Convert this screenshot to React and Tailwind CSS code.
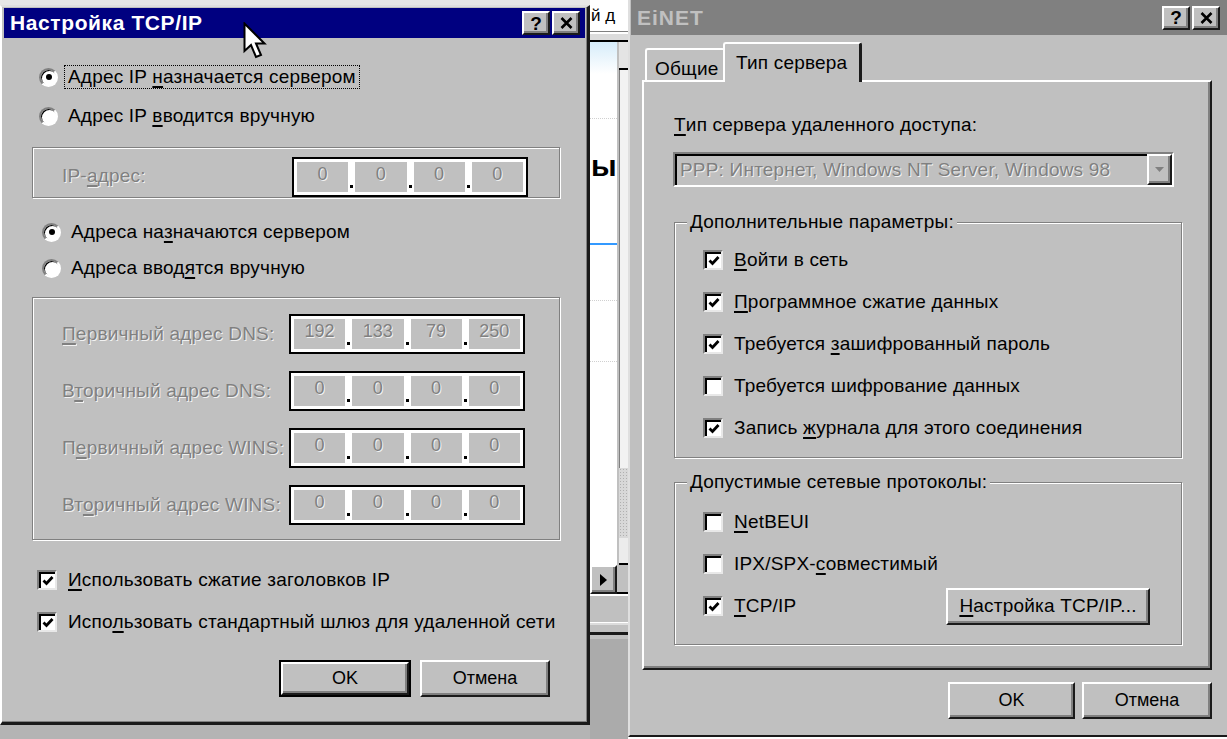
import React from 'react'

const font = "font-['Liberation_Sans',Arial,sans-serif]"
const txt = 'text-[19px] tracking-[0.2px]'
const dim = 'text-[#808080] [text-shadow:1px_1px_0_rgba(255,255,255,0.8)]'
const raised =
  'border-2 border-t-white border-l-white border-r-[#1a1a1a] border-b-[#1a1a1a] shadow-[inset_-2px_-2px_0_#808080] bg-[#c0c0c0]'
const etched = 'border border-[#808080] shadow-[inset_1px_1px_0_#fff,1px_1px_0_#fff]'

function Mn({ t, u }) {
  if (u == null) return <>{t}</>
  return (
    <>
      {t.slice(0, u)}
      <span className="underline decoration-2 underline-offset-[3px]">{t[u]}</span>
      {t.slice(u + 1)}
    </>
  )
}

function Radio({ on }) {
  return (
    <div className="flex h-[19px] w-[19px] shrink-0 items-center justify-center rounded-full border-2 border-t-[#808080] border-l-[#808080] border-r-white border-b-white bg-white shadow-[inset_1px_1px_0_#000]">
      {on && <div className="h-[6px] w-[6px] rounded-full bg-black" />}
    </div>
  )
}

function Check({ on }) {
  return (
    <div className="flex h-[20px] w-[20px] shrink-0 items-center justify-center border-2 border-t-[#808080] border-l-[#808080] border-r-[#e8e8e8] border-b-[#e8e8e8] bg-white shadow-[inset_2px_2px_0_#000]">
      {on && (
        <svg width="14" height="14" viewBox="0 0 14 14" className="ml-[2px] mt-[2px]">
          <path d="M2.5 6.5 L5.5 9.5 L11.5 3" stroke="#000" strokeWidth="2.8" fill="none" />
        </svg>
      )}
    </div>
  )
}

function TitleButtons() {
  return (
    <div className="flex gap-[2px]">
      <div className={`flex h-[24px] w-[28px] items-center justify-center ${raised} text-[19px] font-bold leading-none`}>?</div>
      <div className={`flex h-[24px] w-[28px] items-center justify-center ${raised}`}>
        <svg width="13" height="12" viewBox="0 0 13 12">
          <path d="M1.5 1 L11.5 11 M11.5 1 L1.5 11" stroke="#000" strokeWidth="2.6" />
        </svg>
      </div>
    </div>
  )
}

function IpField({ values }) {
  return (
    <div className="flex h-[40px] w-[236px] shrink-0 border-2 border-black bg-white p-[3px]">
      {values.map((v, i) => (
        <React.Fragment key={i}>
          {i > 0 && (
            <div className="flex w-[7px] flex-col items-center justify-end pb-[4px]">
              <div className="h-[3px] w-[3px] bg-black" />
            </div>
          )}
          <div className={`flex flex-1 justify-center bg-[#c0c0c0] text-[18px] leading-[24px] ${dim}`}>{v}</div>
        </React.Fragment>
      ))}
    </div>
  )
}

function Btn({ children, w, def }) {
  const inner = (
    <div className={`flex h-full w-full items-center justify-center ${raised} text-[18px]`}>{children}</div>
  )
  if (def) return <div className={`h-[37px] ${w} border-2 border-black`}>{inner}</div>
  return <div className={`h-[37px] ${w}`}>{inner}</div>
}

function CheckRow({ on, t, u, h = 'h-[42px]' }) {
  return (
    <div className={`flex ${h} items-center gap-[11px]`}>
      <Check on={on} />
      <span className={txt}>
        <Mn t={t} u={u} />
      </span>
    </div>
  )
}

function DnsRow({ t, u, values }) {
  return (
    <div className="flex h-[40px] items-center justify-between">
      <span className={`${txt} ${dim}`}>
        <Mn t={t} u={u} />
      </span>
      <IpField values={values} />
    </div>
  )
}

function TcpDialog() {
  return (
    <div className="flex h-[720px] flex-col border-t-2 border-l-2 border-t-[#dfdfdf] border-l-white border-r-[3px] border-b-[3px] border-r-[#1a1a1a] border-b-[#1a1a1a] bg-[#c0c0c0] px-[2px] pt-[1px] shadow-[inset_-1px_-1px_0_#808080]">
      <div className="flex h-[30px] items-center justify-between bg-[#000080] pl-[6px] pr-[5px]">
        <span className="text-[21px] font-bold tracking-[0.6px] text-white">Настройка TCP/IP</span>
        <TitleButtons />
      </div>

      <div className="mt-[21px] flex h-[36px] items-center pl-[35px]">
        <Radio on />
        <span className={`ml-[6px] border border-dotted border-black px-[3px] leading-[22px] ${txt}`}>
          <Mn t="Адрес IP назначается сервером" u={9} />
        </span>
      </div>
      <div className="mt-[3px] flex h-[36px] items-center pl-[35px]">
        <Radio />
        <span className={`ml-[10px] ${txt}`}>
          <Mn t="Адрес IP вводится вручную" u={9} />
        </span>
      </div>

      <div className={`ml-[28px] mt-[13px] flex h-[51px] w-[528px] items-center justify-between pl-[29px] pr-[31px] pt-[8px] ${etched}`}>
        <span className={`${txt} ${dim}`}>
          <Mn t="IP-адрес:" u={3} />
        </span>
        <IpField values={['0', '0', '0', '0']} />
      </div>

      <div className="mt-[16px] flex h-[36px] items-center pl-[38px]">
        <Radio on />
        <span className={`ml-[10px] ${txt}`}>
          <Mn t="Адреса назначаются сервером" u={9} />
        </span>
      </div>
      <div className="flex h-[36px] items-center pl-[38px]">
        <Radio />
        <span className={`ml-[10px] ${txt}`}>
          <Mn t="Адреса вводятся вручную" u={11} />
        </span>
      </div>

      <div className={`ml-[28px] mt-[11px] flex h-[243px] w-[528px] flex-col gap-[17px] pl-[29px] pr-[34px] pt-[16px] ${etched}`}>
        <DnsRow t="Первичный адрес DNS:" u={0} values={['192', '133', '79', '250']} />
        <DnsRow t="Вторичный адрес DNS:" u={1} values={['0', '0', '0', '0']} />
        <DnsRow t="Первичный адрес WINS:" u={1} values={['0', '0', '0', '0']} />
        <DnsRow t="Вторичный адрес WINS:" u={2} values={['0', '0', '0', '0']} />
      </div>

      <div className="ml-[33px] mt-[22px]">
        <CheckRow on t="Использовать сжатие заголовков IP" u={0} h="h-[36px]" />
      </div>
      <div className="ml-[33px] mt-[6px]">
        <CheckRow on t="Использовать стандартный шлюз для удаленной сети" u={4} h="h-[36px]" />
      </div>

      <div className="mt-[20px] flex justify-end gap-[9px] pr-[35px]">
        <Btn w="w-[132px]" def>OK</Btn>
        <Btn w="w-[130px]">Отмена</Btn>
      </div>
    </div>
  )
}

function BackStrip() {
  return (
    <div className="flex w-[38px] shrink-0 flex-col bg-[#c0c0c0]">
      <div className="h-[31px] overflow-hidden whitespace-nowrap bg-white pl-[1px] text-[17px] leading-[31px]">й д</div>
      <div className="h-[9px] border-t border-[#808080] bg-[#dcdcdc] shadow-[inset_0_2px_0_#fff]" />
      <div className="h-[2px] bg-black" />
      <div className="flex h-[523px]">
        <div className="flex w-[27px] flex-col bg-white">
          <div className="h-[32px] bg-gradient-to-b from-[#d6ecfa] to-white" />
          <div className="mt-[44px] border-t border-dotted border-[#d0d0d0]" />
          <div className="mt-[30px] pl-[1px] text-[30px] font-bold leading-[34px]">ы</div>
          <div className="mt-[60px] h-[2px] bg-[#3399ff]" />
          <div className="mt-[55px] border-t border-dotted border-[#d0d0d0]" />
          <div className="mt-[60px] border-t border-dotted border-[#d0d0d0]" />
        </div>
        <div className="flex w-[11px] flex-col border-l-2 border-[#c0c0c0] bg-white">
          <div className="h-[28px] border-b-2 border-black bg-[#e4e4e4]" />
          <div className="h-[398px] border-l border-[#808080] bg-[#f2f2f2]" />
          <div className="h-[70px] bg-[#d8d8d8] bg-[radial-gradient(#b0b0b0_1px,transparent_1px)] bg-[length:3px_3px]" />
          <div className="flex-1 border-b-2 border-black bg-[#ececec]" />
        </div>
      </div>
      <div className="flex h-[29px]">
        <div className={`flex w-[27px] items-center justify-center ${raised}`}>
          <svg width="9" height="14" viewBox="0 0 9 14">
            <path d="M1 1 L8 7 L1 13 Z" fill="#000" />
          </svg>
        </div>
        <div className="flex-1 border-b-2 border-black bg-[#c0c0c0]" />
      </div>
      <div className="h-[45px] border-t-2 border-white bg-[#c0c0c0] pt-[26px]">
        <div className="h-[3px] border-t border-white bg-[#dcdcdc]" />
        <div className="mt-[7px] h-[3px] bg-[#1a1a1a]" />
      </div>
      <div className="flex-1 bg-[#ababab]" />
    </div>
  )
}

function Tab({ children, sel, w }) {
  if (sel)
    return (
      <div className={`relative z-10 -mb-[2px] -ml-[2px] flex h-[40px] ${w} items-start rounded-t-[3px] border-l-2 border-t-2 border-r-[3px] border-l-white border-t-white border-r-[#1a1a1a] bg-[#c0c0c0] pl-[11px] pt-[5px] ${txt}`}>
        {children}
      </div>
    )
  return (
    <div className={`flex h-[32px] ${w} items-start rounded-t-[3px] border-l-2 border-t-2 border-r-2 border-l-white border-t-white border-r-[#808080] bg-[#c0c0c0] pl-[8px] pt-[5px] ${txt}`}>
      {children}
    </div>
  )
}

function ServerDialog() {
  return (
    <div className="flex h-[737px] w-[599px] shrink-0 flex-col border-b-2 border-l-2 border-b-[#1a1a1a] border-l-[#dfdfdf] bg-[#c0c0c0] pl-[1px]">
      <div className="flex h-[35px] items-center justify-between bg-[#808080] pl-[6px] pr-[7px]">
        <span className="text-[21px] font-bold tracking-[1px] text-[#c0c0c0]">EiNET</span>
        <TitleButtons />
      </div>

      <div className="ml-[14px] mt-[7px] flex h-[38px] items-end">
        <Tab w="w-[80px]">Общие</Tab>
        <Tab sel w="w-[139px]">Тип сервера</Tab>
      </div>

      <div className="ml-[11px] flex h-[590px] w-[570px] flex-col border-2 border-t-white border-l-white border-r-[#1a1a1a] border-b-[#1a1a1a] shadow-[inset_-2px_-2px_0_#808080]">
        <div className={`ml-[30px] mt-[28px] flex h-[30px] items-center ${txt}`}>
          <Mn t="Тип сервера удаленного доступа:" u={0} />
        </div>
        <div className="ml-[29px] mt-[12px] flex h-[35px] w-[501px] border-2 border-t-[#808080] border-l-[#808080] border-r-white border-b-white bg-[#c0c0c0] shadow-[inset_2px_2px_0_#000]">
          <div className={`flex flex-1 items-center pl-[5px] pt-[2px] ${txt} ${dim}`}>
            PPP: Интернет, Windows NT Server, Windows 98
          </div>
          <div className={`flex w-[25px] items-center justify-center ${raised}`}>
            <svg width="11" height="7" viewBox="0 0 11 7">
              <path d="M1 1 L10 1 L5.5 6 Z" fill="#808080" />
            </svg>
          </div>
        </div>

        <fieldset className={`ml-[30px] mt-[24px] h-[247px] w-[508px] pl-[28px] pt-[6px] ${etched}`}>
          <legend className={`-ml-[16px] bg-[#c0c0c0] px-[3px] leading-[22px] ${txt}`}>Дополнительные параметры:</legend>
          <CheckRow on t="Войти в сеть" u={0} />
          <CheckRow on t="Программное сжатие данных" u={0} />
          <CheckRow on t="Требуется зашифрованный пароль" u={10} />
          <CheckRow t="Требуется шифрование данных" u={21} />
          <CheckRow on t="Запись журнала для этого соединения" u={7} />
        </fieldset>

        <fieldset className={`ml-[30px] mt-[13px] h-[174px] w-[508px] pl-[28px] pr-[31px] pt-[8px] ${etched}`}>
          <legend className={`-ml-[16px] bg-[#c0c0c0] px-[3px] leading-[22px] ${txt}`}>Допустимые сетевые протоколы:</legend>
          <CheckRow t="NetBEUI" u={0} />
          <CheckRow t="IPX/SPX-совместимый" u={8} />
          <div className="flex items-center justify-between">
            <CheckRow on t="TCP/IP" u={0} />
            <Btn w="w-[204px]">
              <span className={txt}>
                <Mn t="Настройка TCP/IP..." u={0} />
              </span>
            </Btn>
          </div>
        </fieldset>
      </div>

      <div className="ml-[11px] mt-[12px] flex w-[570px] justify-end gap-[7px]">
        <Btn w="w-[127px]">OK</Btn>
        <Btn w="w-[130px]">Отмена</Btn>
      </div>
    </div>
  )
}

export default function App() {
  return (
    <div className={`relative flex h-[739px] w-[1227px] overflow-hidden bg-white text-black ${font}`}>
      <div className="flex w-[590px] shrink-0 flex-col">
        <div className="h-[5px] bg-[#e6e6e6]" />
        <TcpDialog />
        <div className="flex-1 bg-[#b4b4b4]" />
      </div>
      <BackStrip />
      <ServerDialog />

      <svg className="absolute left-[243px] top-[22px]" width="24" height="38" viewBox="0 0 24 38">
        <path d="M1.5 1.5 L1.5 29 L8 23 L13 35 L18 33 L13 21.5 L21.5 21.5 Z" fill="#fff" stroke="#000" strokeWidth="2" />
      </svg>
    </div>
  )
}
